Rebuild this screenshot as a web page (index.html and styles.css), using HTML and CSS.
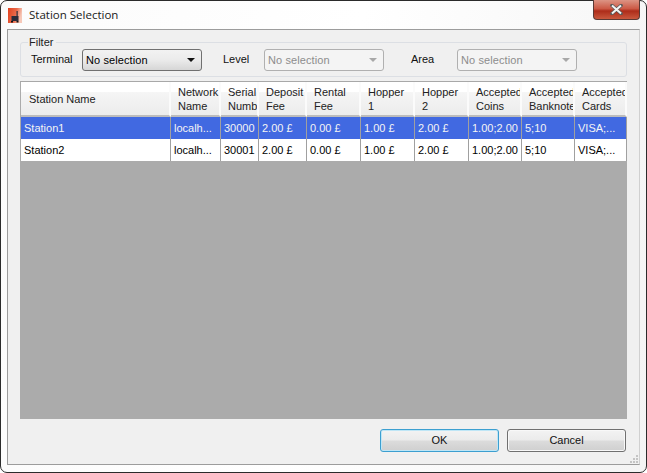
FILE: index.html
```html
<!DOCTYPE html>
<html lang="en">
<head>
<meta charset="UTF-8">
<meta name="viewport" content="width=device-width, initial-scale=1.0">
<title>Station Selection</title>
<link rel="stylesheet" href="styles.css">
</head>
<body>
<div class="window">

  <!-- Title bar -->
  <div class="titlebar">
    <svg class="app-icon" width="14" height="15" viewBox="0 0 14 15">
      <defs>
        <linearGradient id="iconBg" x1="0" y1="0" x2="1" y2="0.300">
          <stop offset="0" stop-color="#e2401c"/>
          <stop offset="0.600" stop-color="#e9694a"/>
          <stop offset="1" stop-color="#f6c8b8"/>
        </linearGradient>
      </defs>
      <rect width="14" height="15" fill="url(#iconBg)"/>
      <path d="M8.500 3h1.200v5h0.800v5h-7v-5h5z" fill="#2a2c3a"/>
      <rect x="3" y="13" width="2" height="1.500" fill="#111"/>
      <rect x="8.500" y="13" width="2" height="1.500" fill="#111"/>
    </svg>
    <span class="title">Station Selection</span>
    <button type="button" class="close-btn" aria-label="Close">
      <svg width="13" height="11" viewBox="0 0 13 11">
        <path d="M2 1.500l9 8M11 1.500l-9 8" stroke="#5a5a5a" stroke-width="3.600" stroke-linecap="round"/>
        <path d="M2 1.500l9 8M11 1.500l-9 8" stroke="#f4f4f4" stroke-width="2"/>
      </svg>
    </button>
  </div>

  <div class="panel">

    <!-- Filter -->
    <fieldset class="filter">
      <legend>Filter</legend>
      <span class="filter-label label-terminal">Terminal</span>
      <div class="combo">
        <span>No selection</span>
        <i class="arrow"></i>
      </div>
      <span class="filter-label label-level">Level</span>
      <div class="combo disabled">
        <span>No selection</span>
        <i class="arrow"></i>
      </div>
      <span class="filter-label label-area">Area</span>
      <div class="combo disabled">
        <span>No selection</span>
        <i class="arrow"></i>
      </div>
    </fieldset>

    <!-- Stations -->
    <div class="grid-area">
      <table class="stations">
        <colgroup>
          <col class="c-name">
          <col class="c-network">
          <col class="c-serial">
          <col class="c-deposit">
          <col class="c-rental">
          <col class="c-hopper">
          <col class="c-hopper">
          <col class="c-coins">
          <col class="c-coins">
          <col class="c-cards">
        </colgroup>
        <thead>
          <tr>
            <th>Station Name</th>
            <th>Network<br>Name</th>
            <th>Serial<br>Number</th>
            <th>Deposit<br>Fee</th>
            <th>Rental<br>Fee</th>
            <th>Hopper<br>1</th>
            <th>Hopper<br>2</th>
            <th>Accepted<br>Coins</th>
            <th>Accepted<br>Banknotes</th>
            <th>Accepted<br>Cards</th>
          </tr>
        </thead>
        <tbody>
          <tr class="selected">
            <td>Station1</td>
            <td>localh...</td>
            <td>30000</td>
            <td>2.00 £</td>
            <td>0.00 £</td>
            <td>1.00 £</td>
            <td>2.00 £</td>
            <td>1.00;2.00</td>
            <td>5;10</td>
            <td>VISA;...</td>
          </tr>
          <tr>
            <td>Station2</td>
            <td>localh...</td>
            <td>30001</td>
            <td>2.00 £</td>
            <td>0.00 £</td>
            <td>1.00 £</td>
            <td>2.00 £</td>
            <td>1.00;2.00</td>
            <td>5;10</td>
            <td>VISA;...</td>
          </tr>
        </tbody>
      </table>
    </div>

    <div class="buttons">
      <button type="button" class="btn default">OK</button>
      <button type="button" class="btn">Cancel</button>
    </div>

    <svg class="grip" width="9" height="9" viewBox="0 0 9 9">
      <path d="M7 1h2v2h-2zM4 4h2v2h-2zM7 4h2v2h-2zM1 7h2v2h-2zM4 7h2v2h-2zM7 7h2v2h-2z" fill="#c4c4c4"/>
    </svg>
  </div>
</div>
</body>
</html>
```

FILE: styles.css
```css
* {
  box-sizing: border-box;
}
html, body {
  height: 100%;
}
body {
  margin: 0;
  background: #fff;
  font-family: "Liberation Sans", Arial, sans-serif;
  font-size: 11px;
  color: #111;
  overflow: hidden;
}
.window {
  height: 473px;
  width: 647px;
  padding: 0 6px 7px 6px;
  display: flex;
  flex-direction: column;
  background: linear-gradient(100deg, #fbfbfb, #ffffff 50%, #f4f4f4);
  border: 1px solid #2b2b2b;
  border-radius: 7px;
}
.titlebar {
  height: 28px;
  flex: none;
  display: flex;
  align-items: flex-start;
  padding-left: 1px;
  position: relative;
}
.app-icon {
  margin-top: 7px;
}
.title {
  margin: 6px 0 0 7px;
  font-family: "Open Sans", "Noto Sans", sans-serif;
  font-size: 11.500px;
  line-height: 16px;
  color: #1a1a1a;
}
.close-btn {
  position: absolute;
  top: -1px;
  right: 0;
  width: 47px;
  height: 20px;
  padding: 0;
  display: flex;
  align-items: center;
  justify-content: center;
  background: linear-gradient(#dc9484, #cc5a46 45%, #ad2c1a 58%, #c9583e);
  border: 1px solid #5a3a36;
  border-top: 0;
  border-radius: 0 0 4px 4px;
}
.panel {
  flex: 1;
  position: relative;
  display: flex;
  flex-direction: column;
  padding: 7px 12px 10px 12px;
  background: #f0f0f0;
  border: 1px solid #9c9c9c;
  border-right-color: #d0d0d0;
}
.filter {
  height: 40px;
  margin: 0 0 4px 0;
  padding: 0;
  flex: none;
  display: flex;
  align-items: flex-start;
  border: 1px solid #dcdfe4;
  border-radius: 3px;
}
.filter legend {
  margin-left: 7px;
  padding: 0 3px 0 1px;
  line-height: 11px;
  color: #222;
}
.filter-label {
  line-height: 14px;
  margin-top: 4px;
}
.label-terminal {
  margin-left: 10px;
  width: 51px;
}
.label-level {
  margin-left: 21px;
  width: 41px;
}
.label-area {
  margin-left: 27px;
  width: 46px;
}
.combo {
  width: 120px;
  height: 22px;
  margin-top: 1px;
  padding-left: 3px;
  display: flex;
  align-items: center;
  justify-content: space-between;
  background: linear-gradient(#f2f2f2, #ebebeb 50%, #d6d6d6);
  border: 1px solid #707070;
  border-radius: 3px;
  font-size: 11px;
  letter-spacing: 0.100px;
  color: #000;
}
.combo .arrow {
  width: 0;
  height: 0;
  margin-right: 6px;
  border-left: 4px solid transparent;
  border-right: 4px solid transparent;
  border-top: 4px solid #111;
}
.combo.disabled {
  background: #f4f4f4;
  border-color: #b0b0b0;
  color: #8d8d8d;
}
.combo.disabled .arrow {
  border-top-color: #a8a8a8;
}
.grid-area {
  height: 338px;
  flex: none;
  background: #ababab;
  border-top: 1px solid #a8a8a8;
}
.stations {
  width: 606px;
  margin-left: 1px;
  table-layout: fixed;
  border-collapse: separate;
  border-spacing: 0;
}
.c-name { width: 150px; }
.c-network { width: 50px; }
.c-serial { width: 38px; }
.c-deposit { width: 48px; }
.c-rental { width: 54px; }
.c-hopper { width: 54px; }
.c-coins { width: 53px; }
.c-cards { width: 52px; }
.stations th {
  height: 35px;
  padding: 1px 0 0 7px;
  overflow: hidden;
  white-space: nowrap;
  font-weight: normal;
  text-align: left;
  line-height: 14px;
  color: #222;
  background: linear-gradient(#ffffff, #ffffff 30%, #f5f5f5 32%, #ececec);
  border-right: 2px solid #fbfbfb;
  border-bottom: 2px solid #bcbcbc;
}
.stations th:first-child {
  padding-left: 8px;
}
.stations td {
  height: 22px;
  padding: 0 0 0 3px;
  overflow: hidden;
  white-space: nowrap;
  background: #fff;
  color: #000;
  border-right: 1px solid #a0a0a0;
}
.stations tr.selected td {
  background: #4169e1;
  color: #f4f4f4;
}
.buttons {
  margin-top: 10px;
  display: flex;
  justify-content: flex-end;
  gap: 8px;
  padding-right: 1px;
}
.btn {
  width: 119px;
  height: 23px;
  padding: 0 0 2px 0;
  font-family: "Liberation Sans", Arial, sans-serif;
  font-size: 11px;
  color: #111;
  background: linear-gradient(#f3f3f3, #ebebeb 48%, #dcdcdc 52%, #cfcfcf);
  border: 1px solid #707070;
  border-radius: 3px;
  box-shadow: inset 0 0 0 1px #f8f8f8;
}
.btn.default {
  border-color: #3c9fd0;
  box-shadow: inset 0 0 0 1px #bfe6f6;
}
.grip {
  position: absolute;
  right: 1px;
  bottom: 1px;
}
```
